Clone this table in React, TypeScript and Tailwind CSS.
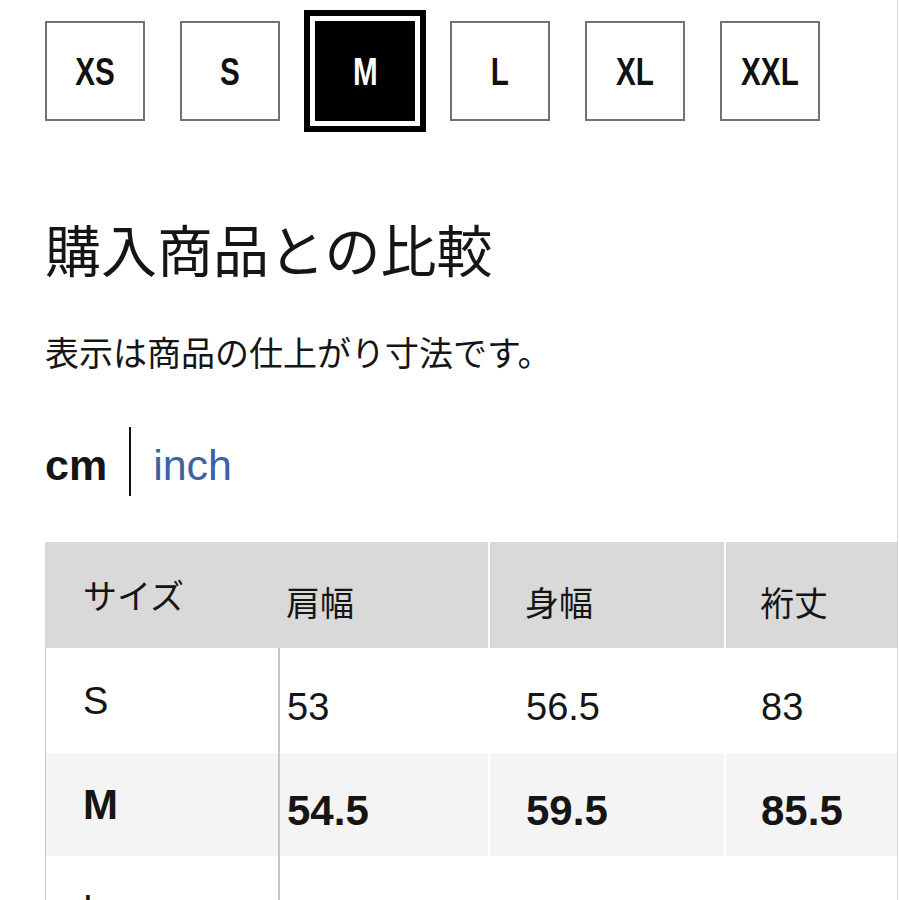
import React from 'react';

const sizes = ['XS', 'S', 'M', 'L', 'XL', 'XXL'];

const rows = [
  { size: 'S', vals: ['53', '56.5', '83'], bold: false, bg: 'bg-white' },
  { size: 'M', vals: ['54.5', '59.5', '85.5'], bold: true, bg: 'bg-[#f4f4f4]' },
  { size: 'L', vals: ['56', '62.5', '88'], bold: false, bg: 'bg-white' },
];

const jp = "font-['Noto_Sans_CJK_JP',sans-serif]";
const latin = "font-['Liberation_Sans','Noto_Sans_CJK_JP',sans-serif]";

function SizeButton({ label, active }: { label: string; active?: boolean }) {
  return (
    <button
      className={
        active
          ? 'flex h-[100px] w-[100px] items-center justify-center border-2 border-black bg-black text-white outline-[6px] outline-offset-[5px] outline-black outline-solid'
          : 'flex h-[100px] w-[100px] items-center justify-center border-2 border-[#727272] bg-white text-[#111]'
      }
    >
      <span className={`inline-block scale-x-[0.76] text-[39px] leading-none font-bold ${latin}`}>
        {label}
      </span>
    </button>
  );
}

export default function App() {
  return (
    <div className="h-[900px] w-[898px] overflow-hidden border-r border-[#d2d2d2] bg-white pl-[45px] text-[#151515]">
      <div className="flex gap-[35px] pt-[21px]">
        {sizes.map((s) => (
          <SizeButton key={s} label={s} active={s === 'M'} />
        ))}
      </div>

      <h2 className={`mt-[99px] text-[56px] leading-none font-normal ${jp}`}>購入商品との比較</h2>

      <p className={`mt-[59px] text-[34px] leading-none ${jp}`}>表示は商品の仕上がり寸法です。</p>

      <div className={`mt-[58px] flex items-start text-[43px] leading-none ${latin}`}>
        <span className="mt-[17px] font-bold">cm</span>
        <div className="mx-[22px] h-[69px] w-[2px] bg-[#111]" />
        <span className="mt-[17px] text-[#3b62a5]">inch</span>
      </div>

      <div className="mt-[46px] w-full overflow-hidden">
        <div className={`grid h-[106px] grid-cols-[235px_208px_236px_1fr] bg-[#d9d9d9] text-[34px] leading-none ${jp}`}>
          <div className="flex items-center pl-[38px]">サイズ</div>
          <div className="flex items-center pt-[14px] pl-[6px]">肩幅</div>
          <div className="flex items-center border-l-2 border-white pt-[14px] pl-[35px]">身幅</div>
          <div className="flex items-center border-l-2 border-white pt-[14px] pl-[34px]">裄丈</div>
        </div>
        {rows.map((r, i) => (
          <div
            key={r.size}
            className={`grid grid-cols-[235px_208px_236px_1fr] leading-none ${latin} ${r.bg} ${
              r.bold ? 'text-[42px] font-bold' : 'text-[38px]'
            } ${i === 1 ? 'h-[103px]' : 'h-[105px]'}`}
          >
            <div className="flex items-center border-r-2 border-l border-[#c6c6c6] pl-[37px]">{r.size}</div>
            <div className="flex items-center pt-[12px] pl-[7px]">{r.vals[0]}</div>
            <div className="flex items-center border-l-2 border-white pt-[12px] pl-[36px]">{r.vals[1]}</div>
            <div className="flex items-center border-l-2 border-white pt-[12px] pl-[35px]">{r.vals[2]}</div>
          </div>
        ))}
      </div>
    </div>
  );
}
